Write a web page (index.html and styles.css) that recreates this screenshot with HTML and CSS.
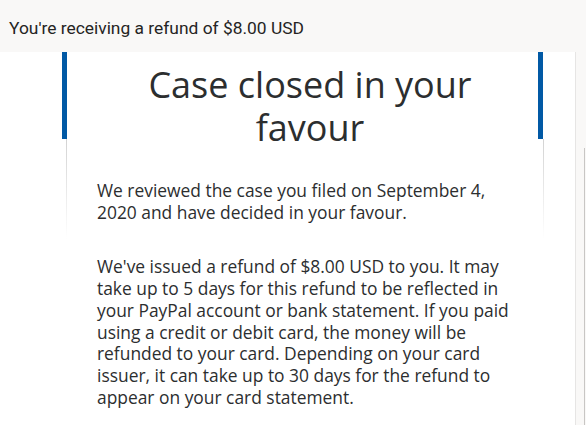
FILE: index.html
```html
<!DOCTYPE html>
<html>
<head>
<meta charset="utf-8">
<link rel="stylesheet" href="styles.css">
</head>
<body>
<div class="topbar">You're receiving a refund of $8.00 USD</div>
<div class="main">
  <div class="pane">
    <div class="card">
      <h1 class="title">Case closed in your favour</h1>
      <p class="para">We reviewed the case you filed on September 4, 2020 and have decided in your favour.</p>
      <p class="para">We've issued a refund of $8.00 USD to you. It may take up to 5 days for this refund to be reflected in your PayPal account or bank statement. If you paid using a credit or debit card, the money will be refunded to your card. Depending on your card issuer, it can take up to 30 days for the refund to appear on your card statement.</p>
    </div>
  </div>
  <div class="scroll"><div class="thumb"></div></div>
</div>
</body>
</html>
```
FILE: styles.css
```css
html, body { margin: 0; padding: 0; }
body {
  width: 586px; height: 425px; overflow: hidden;
  background: #f9f8f7;
  font-family: "Open Sans", "Noto Sans", sans-serif;
  color: #2c2e2f;
}
.topbar {
  height: 52px; box-sizing: border-box;
  padding: 17px 0 0 9px;
  font-family: Roboto, "Open Sans", sans-serif;
  font-size: 17.4px; line-height: 22px; color: #252423;
  background: #f9f8f7;
}
.main { display: flex; height: 373px; }
.pane {
  width: 576px; background: #fff;
  border-right: 1px solid #e6e5e4;
  padding-left: 62px; box-sizing: border-box;
}
.card {
  width: 486px; box-sizing: border-box;
  position: relative;
  padding: 0 30px 0 35px;
  background:
    linear-gradient(#d3d3d3, rgba(211,211,211,0)) 4px 87px / 1px 100px no-repeat,
    linear-gradient(#d3d3d3, rgba(211,211,211,0)) 481px 87px / 1px 100px no-repeat;
}
.card::before, .card::after {
  content: ""; position: absolute; top: 0; width: 5px; height: 87px; background: #0159a5;
}
.card::before { left: 0; }
.card::after { right: 5px; }
.title {
  margin: 0 -5px 0 0; padding-top: 11px;
  font-weight: 400; font-size: 36px; line-height: 43px;
  text-align: center; color: #2c2e2f;
}
.para {
  margin: 0; font-size: 17.4px; line-height: 21.7px; color: #2c2e2f;
}
.title + .para { margin-top: 31px; }
.para + .para { margin-top: 33px; }
.scroll { width: 9px; position: relative; }
.thumb { position: absolute; right: 0; top: 96px; width: 1px; height: 277px; background: #c8c6c4; }
```
